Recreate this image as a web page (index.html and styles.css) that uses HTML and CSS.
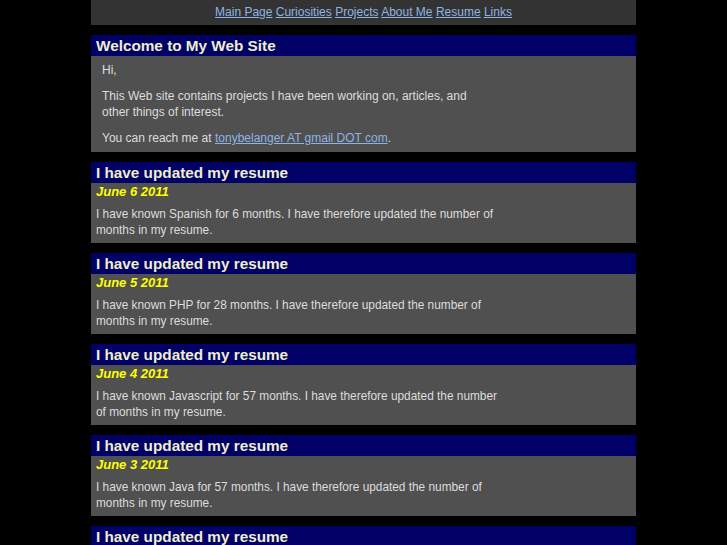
FILE: index.html
```html
<!DOCTYPE html>
<html>
<head>
<meta charset="utf-8">
<title>Tony Belanger</title>
<link rel="stylesheet" href="styles.css">
</head>
<body>
<div class="page">
  <nav class="nav">
    <a href="#">Main Page</a> <a href="#">Curiosities</a> <a href="#">Projects</a> <a href="#">About Me</a> <a href="#">Resume</a> <a href="#">Links</a>
  </nav>
  <section class="box">
    <h2 class="box-title">Welcome to My Web Site</h2>
    <div class="welcome">
      <p>Hi,</p>
      <p class="wide">This Web site contains projects I have been working on, articles, and other things of interest.</p>
      <p>You can reach me at <a href="#">tonybelanger AT gmail DOT com</a>.</p>
    </div>
  </section>
  <section class="box">
    <h2 class="box-title">I have updated my resume</h2>
    <div class="post">
      <div class="date">June 6 2011</div>
      <p>I have known Spanish for 6 months. I have therefore updated the number of months in my resume.</p>
    </div>
  </section>
  <section class="box">
    <h2 class="box-title">I have updated my resume</h2>
    <div class="post">
      <div class="date">June 5 2011</div>
      <p>I have known PHP for 28 months. I have therefore updated the number of months in my resume.</p>
    </div>
  </section>
  <section class="box">
    <h2 class="box-title">I have updated my resume</h2>
    <div class="post">
      <div class="date">June 4 2011</div>
      <p>I have known Javascript for 57 months. I have therefore updated the number of months in my resume.</p>
    </div>
  </section>
  <section class="box">
    <h2 class="box-title">I have updated my resume</h2>
    <div class="post">
      <div class="date">June 3 2011</div>
      <p>I have known Java for 57 months. I have therefore updated the number of months in my resume.</p>
    </div>
  </section>
  <section class="box">
    <h2 class="box-title">I have updated my resume</h2>
    <div class="post">
      <div class="date">June 2 2011</div>
      <p>I have known C++ for 57 months. I have therefore updated the number of months in my resume.</p>
    </div>
  </section>
</div>
</body>
</html>
```
FILE: styles.css
```css
html, body {
  margin: 0;
  padding: 0;
  background: #000;
}
body {
  font-family: "Liberation Sans", Arial, sans-serif;
  font-size: 12px;
  color: #dddddd;
}
.page {
  width: 545px;
  margin: 0 auto;
  display: flex;
  flex-direction: column;
  gap: 10px;
}
a {
  color: #8fb4e3;
  text-decoration: underline;
}
.nav {
  background: #333333;
  height: 25px;
  line-height: 24px;
  text-align: center;
  font-size: 12px;
}
.box {
  background: #505050;
}
.box-title {
  margin: 0;
  background: #000066;
  color: #eeeecc;
  font-size: 15.3px;
  font-weight: bold;
  height: 21px;
  line-height: 21px;
  padding: 0 5px;
}
.welcome {
  padding: 6px 11px 6px;
}
.welcome p {
  margin: 0 0 10px;
  line-height: 16px;
}
.welcome p:last-child {
  margin-bottom: 0;
}
.welcome .wide {
  width: 380px;
}
.post {
  padding: 0 5px 5px;
}
.date {
  color: #ffff00;
  font-weight: bold;
  font-style: italic;
  font-size: 13px;
  height: 17px;
  line-height: 17px;
}
.post p {
  margin: 6px 0 0;
  width: 410px;
  font-size: 11.85px;
  line-height: 16px;
}
```
